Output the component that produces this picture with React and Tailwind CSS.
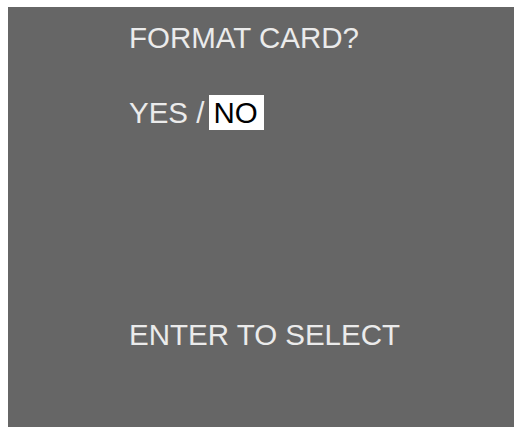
export default function App() {
  return (
    <div className="w-[518px] h-[432px] bg-white pl-[8px] pt-[7px]">
      <div
        className="w-[506px] h-[420px] bg-[#666666] pl-[121px] pt-[16px] flex flex-col text-[#ebebeb] text-[29.5px]"
        style={{ fontFamily: '"Liberation Sans", Arial, sans-serif' }}
      >
        <div className="leading-[29px]">FORMAT CARD?</div>
        <div className="mt-[43px] leading-[35px] flex">
          <span>YES /</span>
          <span className="ml-[5px] bg-white text-black pl-[4px] pr-[6px] leading-[35px]">NO</span>
        </div>
        <div className="mt-[190px] leading-[29px]">ENTER TO SELECT</div>
      </div>
    </div>
  )
}
